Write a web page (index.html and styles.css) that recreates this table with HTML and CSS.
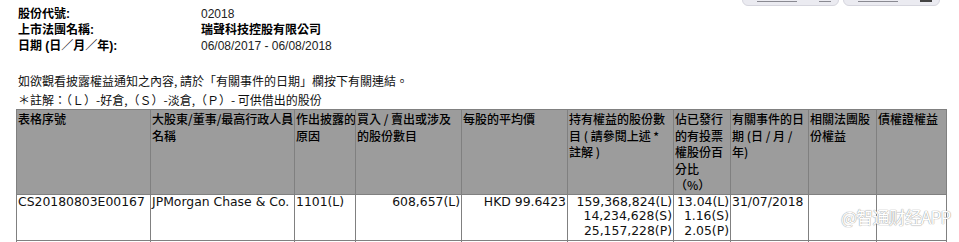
FILE: index.html
```html
<!DOCTYPE html>
<html>
<head>
<meta charset="utf-8">
<link rel="stylesheet" href="styles.css">
</head>
<body>
<div class="topbtns">
  <div class="tbtn"><span class="mk w30"></span><span class="mk w12"></span></div>
  <div class="tbtn"><span class="mk w30"></span><span class="mk w12 dark"></span></div>
</div>
<div class="page">
  <div class="info">
    <div class="lbl">股份代號:</div><div class="val">02018</div>
    <div class="lbl">上市法團名稱:</div><div class="val bold">瑞聲科技控股有限公司</div>
    <div class="lbl">日期 (日／月／年):</div><div class="val">06/08/2017 - 06/08/2018</div>
  </div>
  <div class="notes">
    <div>如欲觀看披露權益通知之內容, 請於「有關事件的日期」欄按下有關連結。</div>
    <div>＊註解：（Ｌ）-好倉,（Ｓ）-淡倉,（Ｐ）- 可供借出的股份</div>
  </div>
  <table class="grid">
    <colgroup>
      <col class="c1"><col class="c2"><col class="c3"><col class="c4"><col class="c5">
      <col class="c6"><col class="c7"><col class="c8"><col class="c9"><col class="c10">
    </colgroup>
    <thead>
      <tr>
        <th>表格序號</th>
        <th>大股東/董事/最高行政人員<br>名稱</th>
        <th>作出披露的<br>原因</th>
        <th>買入 / 賣出或涉及<br>的股份數目</th>
        <th>每股的平均價</th>
        <th>持有權益的股份數<br>目 ( 請參閱上述 *<br>註解 )</th>
        <th>佔已發行<br>的有投票<br>權股份百<br>分比<br>（%）</th>
        <th>有關事件的日<br>期 (日 / 月 /<br>年)</th>
        <th>相關法團股<br>份權益</th>
        <th>債權證權益</th>
      </tr>
    </thead>
    <tbody>
      <tr>
        <td>CS20180803E00167</td>
        <td>JPMorgan Chase &amp; Co.</td>
        <td>1101(L)</td>
        <td class="r">608,657(L)</td>
        <td class="r">HKD 99.6423</td>
        <td class="r">159,368,824(L)<br>14,234,628(S)<br>25,157,228(P)</td>
        <td class="r">13.04(L)<br>1.16(S)<br>2.05(P)</td>
        <td>31/07/2018</td>
        <td></td>
        <td></td>
      </tr>
      <tr>
        <td>CS20180803E00166</td>
        <td>JPMorgan Chase &amp; Co.</td>
        <td>1201(L)</td>
        <td class="r">608,657(L)</td>
        <td class="r">HKD 99.6423</td>
        <td class="r">159,368,824(L)</td>
        <td class="r">13.04(L)</td>
        <td>31/07/2018</td>
        <td></td>
        <td></td>
      </tr>
    </tbody>
  </table>
</div>
<div class="wm">@智通财经APP</div>
</body>
</html>
```
FILE: styles.css
```css
html, body {
  margin: 0;
  padding: 0;
  background: #fff;
  overflow: hidden;
  height: 242px;
}
body {
  font-family: "Liberation Sans", "Noto Sans CJK TC", sans-serif;
  font-size: 12px;
  color: #000;
  position: relative;
}
.page {
  padding: 6px 0 0 16px;
}
.info {
  display: grid;
  grid-template-columns: 183px auto;
  line-height: 16px;
  padding-left: 2px;
}
.lbl {
  font-weight: bold;
}
.val {
  color: #222;
}
.val.bold {
  font-weight: bold;
  color: #000;
}
.notes {
  margin-top: 17px;
  padding-left: 2px;
  line-height: 19px;
  font-family: "Noto Sans CJK TC", sans-serif;
  color: #111;
}
.grid {
  margin-top: 0;
  border-collapse: collapse;
  table-layout: fixed;
  width: 930px;
}
.c1 { width: 134px; }
.c2 { width: 144px; }
.c3 { width: 61px; }
.c4 { width: 106px; }
.c5 { width: 106px; }
.c6 { width: 106px; }
.c7 { width: 57px; }
.c8 { width: 78px; }
.c9 { width: 68px; }
.c10 { width: 70px; }
.grid th, .grid td {
  border: 1px solid #808080;
  vertical-align: top;
  padding: 0 1px;
  overflow: hidden;
  white-space: nowrap;
}
.grid th {
  background: #9c9c9c;
  font-family: "Noto Sans CJK TC", sans-serif;
  font-weight: 500;
  font-size: 12px;
  line-height: 16.6px;
  text-align: left;
  padding-top: 1px;
  height: 82px;
  color: #000;
}
.grid td {
  font-family: "DejaVu Sans", Verdana, sans-serif;
  font-size: 12.4px;
  line-height: 14.3px;
  color: #111;
  padding-top: 0;
  padding-bottom: 2px;
}
.grid td.r {
  text-align: right;
}
.topbtns {
  position: absolute;
  top: -15px;
  left: 742px;
  display: flex;
  gap: 4px;
}
.tbtn {
  width: 97px;
  height: 21px;
  background: #ebebf1;
  border: 1px solid #d6d6de;
  border-radius: 6px;
  box-sizing: border-box;
  display: flex;
  align-items: flex-end;
  gap: 22px;
  padding: 0 0 3px 14px;
}
.mk {
  display: block;
  height: 1px;
  background: #8a8a92;
}
.mk.w30 { width: 40px; }
.mk.w12 { width: 12px; }
.mk.dark { background: #444; height: 2px; }
.wm {
  position: absolute;
  left: 841px;
  top: 204px;
  font-family: "Noto Sans CJK SC", sans-serif;
  font-size: 17px;
  color: #fff;
  letter-spacing: -0.8px;
  text-shadow: 0 0 1px #9a9a9a, 0 0 1px #9a9a9a;
}
```
